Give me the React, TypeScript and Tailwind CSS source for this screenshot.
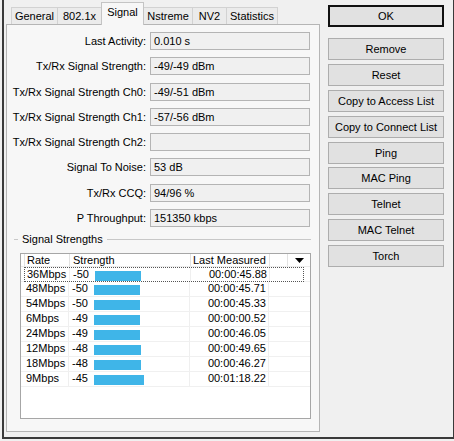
import React from "react";

const tabs = [
  { name: "General", w: "w-[47px]", active: false },
  { name: "802.1x", w: "w-[45px]", active: false },
  { name: "Signal", w: "w-[43px]", active: true },
  { name: "Nstreme", w: "w-[50px]", active: false },
  { name: "NV2", w: "w-[35px]", active: false },
  { name: "Statistics", w: "w-[52px]", active: false },
];

const fields: [string, string][] = [
  ["Last Activity:", "0.010 s"],
  ["Tx/Rx Signal Strength:", "-49/-49 dBm"],
  ["Tx/Rx Signal Strength Ch0:", "-49/-51 dBm"],
  ["Tx/Rx Signal Strength Ch1:", "-57/-56 dBm"],
  ["Tx/Rx Signal Strength Ch2:", ""],
  ["Signal To Noise:", "53 dB"],
  ["Tx/Rx CCQ:", "94/96 %"],
  ["P Throughput:", "151350 kbps"],
];

// rate, strength, bar width (px), last measured
const rows: [string, string, number, string][] = [
  ["36Mbps", "-50", 46, "00:00:45.88"],
  ["48Mbps", "-50", 46, "00:00:45.71"],
  ["54Mbps", "-50", 46, "00:00:45.33"],
  ["6Mbps", "-49", 46, "00:00:00.52"],
  ["24Mbps", "-49", 46, "00:00:46.05"],
  ["12Mbps", "-48", 47, "00:00:49.65"],
  ["18Mbps", "-48", 47, "00:00:46.27"],
  ["9Mbps", "-45", 50, "00:01:18.22"],
];

const buttons = [
  "Remove",
  "Reset",
  "Copy to Access List",
  "Copy to Connect List",
  "Ping",
  "MAC Ping",
  "Telnet",
  "MAC Telnet",
  "Torch",
];

function Tab({ name, w, active }: { name: string; w: string; active: boolean }) {
  if (active) {
    return (
      <div
        className={`${w} -ml-px h-[23px] translate-y-[1px] relative z-10 bg-[#f7f7f7] border-l border-t border-r border-[#c4c4c4] flex justify-center pt-[3px] leading-[13px]`}
      >
        {name}
      </div>
    );
  }
  return (
    <div
      className={`${w} -ml-px first:ml-0 h-[17px] bg-[#ebebeb] border-l border-t border-r border-[#d2d2d2] flex items-center justify-center leading-[13px]`}
    >
      {name}
    </div>
  );
}

function SignalList() {
  return (
    <div className="ml-[13px] mt-[7px] w-[291px] h-[166px] border border-[#a6a6a6] bg-white">
      {/* header */}
      <div className="flex h-[13px] leading-[13px] border-b border-[#ececec]">
        <div className="w-[3px]" />
        <div className="w-[45px] border-l border-[#e2e2e2] pl-[2px]">Rate</div>
        <div className="w-[121px] border-l border-[#e2e2e2] pl-[3px]">Strength</div>
        <div className="w-[79px] border-l border-[#e2e2e2] pl-[2px]">Last Measured</div>
        <div className="w-[18px] border-l border-[#e2e2e2]" />
        <div className="flex-1 border-l border-[#e2e2e2] flex items-center justify-center">
          <svg width="9" height="5" viewBox="0 0 9 5">
            <path d="M0 0 H9 L4.5 5 Z" fill="#000" />
          </svg>
        </div>
      </div>
      {rows.map(([rate, str, bar, last], i) => (
        <div key={rate} className="flex h-[15px]">
          <div className="w-[3px] border-b border-[#f0f0f0]" />
          <div
            className={`flex w-[280px] ${
              i === 0 ? "border border-dotted border-[#555]" : "border-b border-[#f0f0f0]"
            }`}
          >
            <div className="w-[45px] pl-[2px] leading-[13px] border-r border-[#efefef]">{rate}</div>
            <div className="w-[121px] pl-[3px] flex border-r border-[#efefef]">
              <span className="w-[22px] leading-[13px]">{str}</span>
              <div className="mt-[3px] h-[10px] bg-[#3fb5e8]" style={{ width: bar }} />
            </div>
            <div className="w-[79px] pr-[2px] text-right leading-[13px] border-r border-[#efefef]">
              {last}
            </div>
            <div className="flex-1" />
          </div>
          <div className="flex-1 border-b border-[#f0f0f0]" />
        </div>
      ))}
    </div>
  );
}

export default function App() {
  return (
    <div className="w-[454px] h-[441px] bg-[#f0f0f0] overflow-hidden text-[11px] text-black font-['Liberation_Sans',Arial,sans-serif]">
      <div className="ml-[2px] w-[452px] h-[439px] border-l-2 border-r border-b-2 border-[#3a3a3a] flex">
        {/* tab control */}
        <div className="ml-[2px] w-[314px] flex flex-col">
          <div className="h-[24px] pl-[5px] flex items-end">
            {tabs.map((t) => (
              <Tab key={t.name} {...t} />
            ))}
          </div>
          <div className="h-[408px] border border-[#b5b5b5] bg-[#f7f7f7] pt-[7px] flex flex-col">
            <div className="grid grid-cols-[139px_160px] gap-x-[4px] gap-y-[7.3px]">
              {fields.map(([label, value]) => (
                <React.Fragment key={label}>
                  <div className="h-[18px] leading-[18px] text-right">{label}</div>
                  <div className="h-[18px] leading-[16px] border border-[#b4b4b4] bg-[#f0f0f0] pl-[3px]">
                    {value}
                  </div>
                </React.Fragment>
              ))}
            </div>
            {/* group header */}
            <div className="mt-[5px] h-[14px] flex items-center">
              <div className="ml-[7px] w-[4px] h-px bg-[#c8c8c8]" />
              <span className="ml-[4px] leading-[14px]">Signal Strengths</span>
              <div className="ml-[4px] mr-[8px] flex-1 h-px bg-[#c8c8c8]" />
            </div>
            <SignalList />
          </div>
        </div>
        {/* buttons */}
        <div className="ml-[8px] w-[116px] pt-[5px] flex flex-col">
          <button className="h-[22px] border-2 border-[#111] bg-[#e1e1e1] leading-[16px]">OK</button>
          <div className="mt-[11px] flex flex-col gap-[3.9px]">
            {buttons.map((b) => (
              <button key={b} className="h-[22px] border border-[#adadad] bg-[#e1e1e1] leading-[18px]">
                {b}
              </button>
            ))}
          </div>
        </div>
      </div>
    </div>
  );
}
